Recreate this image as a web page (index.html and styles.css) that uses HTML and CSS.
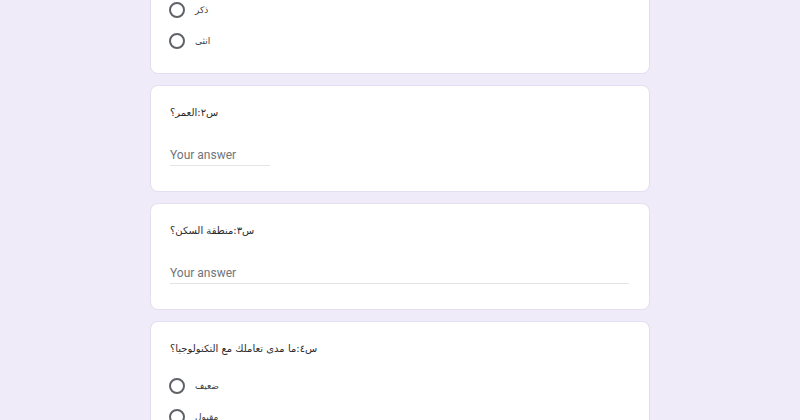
FILE: index.html
```html
<!DOCTYPE html>
<html lang="ar">
<head>
    <meta charset="UTF-8">
    <meta name="viewport" content="width=device-width, initial-scale=1.0">
    <title>استبيان</title>
    <link rel="stylesheet" href="styles.css">
</head>
<body>
    <div class="formulario">

        <div class="cartao">
            <div class="pergunta" dir="rtl">س١:الجنس؟</div>
            <div class="opcoes">
                <label class="opcao"><span class="radio"></span><span dir="rtl">ذكر</span></label>
                <label class="opcao"><span class="radio"></span><span dir="rtl">انثى</span></label>
            </div>
        </div>

        <div class="cartao">
            <div class="pergunta" dir="rtl">س٢:العمر؟</div>
            <div class="resposta curta">Your answer</div>
        </div>

        <div class="cartao">
            <div class="pergunta" dir="rtl">س٣:منطقة السكن؟</div>
            <div class="resposta">Your answer</div>
        </div>

        <div class="cartao">
            <div class="pergunta" dir="rtl">س٤:ما مدى تعاملك مع التكنولوجيا؟</div>
            <div class="opcoes">
                <label class="opcao"><span class="radio"></span><span dir="rtl">ضعيف</span></label>
                <label class="opcao"><span class="radio"></span><span dir="rtl">مقبول</span></label>
                <label class="opcao"><span class="radio"></span><span dir="rtl">جيد</span></label>
            </div>
        </div>

    </div>
</body>
</html>
```

FILE: styles.css
```css
* {
    margin: 0;
    padding: 0;
    box-sizing: border-box;
}

body {
    background-color: #f0ebf8;
    font-family: "DejaVu Sans", "Liberation Sans", sans-serif;
    color: #202124;
}

.formulario {
    width: 500px;
    margin: -55px auto 0;
    display: flex;
    flex-direction: column;
    gap: 11px;
}

.cartao {
    background-color: #fff;
    border: 1px solid #e3def0;
    border-radius: 8px;
    padding: 19px 20px 17px 18px;
}

/* texto em árabe, mas alinhado à esquerda como no formulário original */
.pergunta {
    text-align: left;
    font-size: 10px;
    line-height: 16px;
    height: 16px;
    padding-left: 1px;
    color: #2b2b2b;
}

.opcoes {
    margin-top: 13px;
}

.opcao {
    display: flex;
    align-items: center;
    height: 31px;
    font-size: 9px;
    line-height: 12px;
    color: #3c4043;
}

.radio {
    flex: none;
    width: 16px;
    height: 16px;
    border: 2px solid #5f6368;
    border-radius: 50%;
    margin-right: 10px;
}

.resposta {
    margin-top: 26px;
    margin-left: 1px;
    font-family: Roboto, "Liberation Sans", sans-serif;
    font-size: 12px;
    line-height: 16px;
    height: 19px;
    color: #70757a;
    padding-bottom: 2px;
    border-bottom: 1px solid #e4e4e6;
    margin-bottom: 8px;
}

.resposta.curta {
    width: 100px;
}
```
